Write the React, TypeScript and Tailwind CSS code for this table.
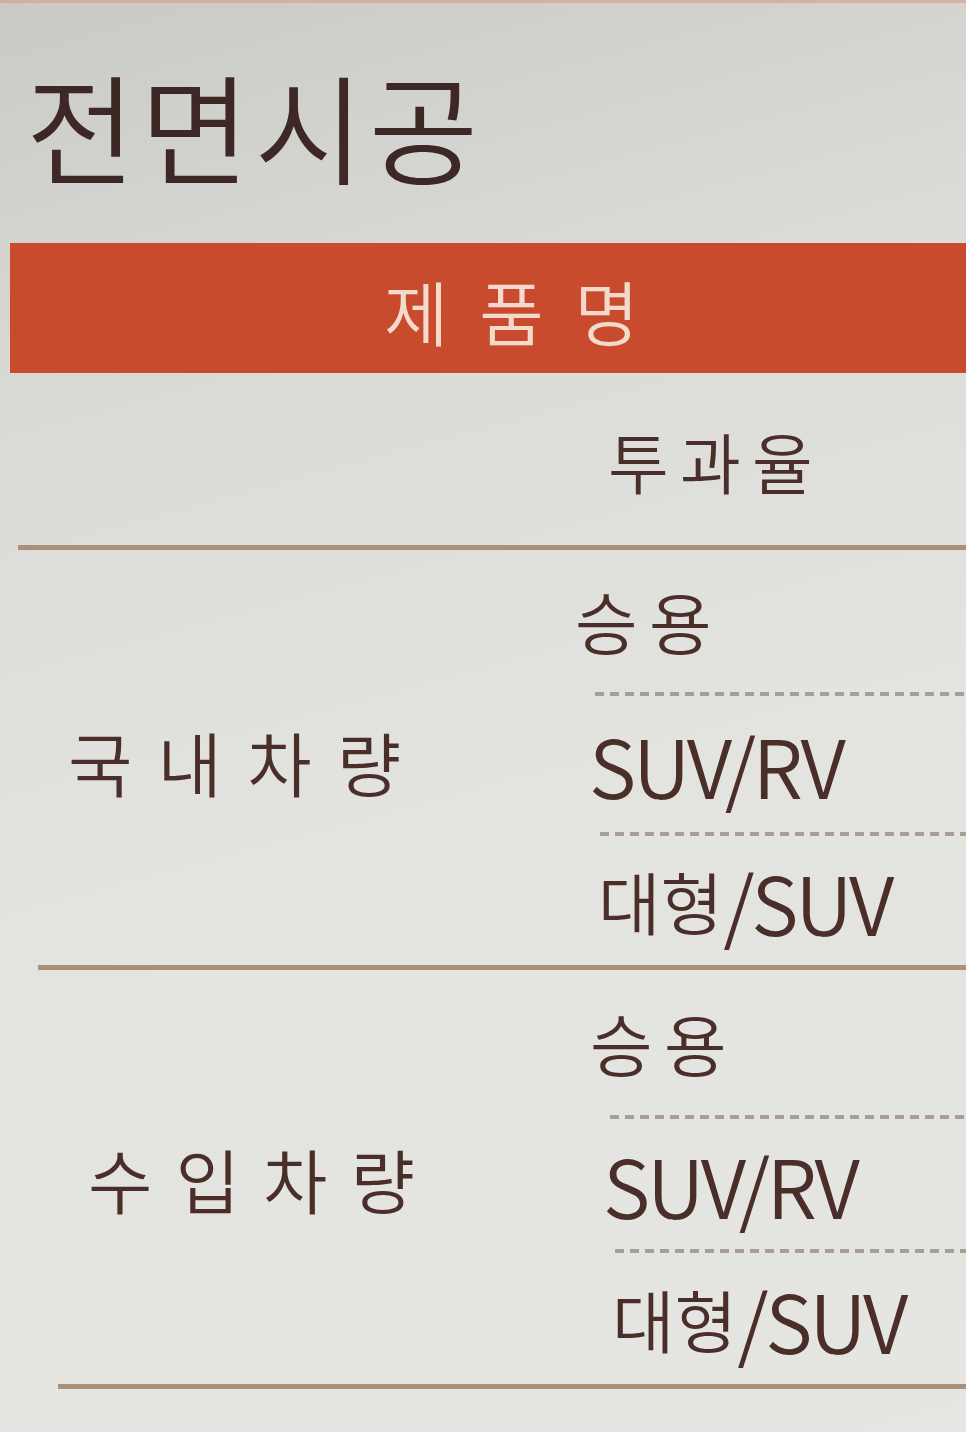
import React from "react";

const KR = { fontFamily: '"Noto Sans CJK KR", "Noto Sans", sans-serif' };

function Dash({ ml }: { ml: string }) {
  return (
    <div
      className={`h-[4px] ${ml} bg-[repeating-linear-gradient(90deg,#9b8b82_0px,#9b8b82_9px,transparent_9px,transparent_15px)] opacity-80`}
    />
  );
}

function Item({ ko, en, h, pl }: { ko?: string; en?: string; h: string; pl: string }) {
  return (
    <div className={`flex items-center ${h} ${pl} text-[#4a2e2a] leading-none font-[350]`}>
      {ko && <span className={`text-[68px] ${en ? "" : "tracking-[0.17em]"}`}>{ko}</span>}
      {en && <span className="text-[80px] tracking-[-0.04em]">{en}</span>}
    </div>
  );
}

export default function App() {
  return (
    <div
      className="w-[966px] h-[1432px] overflow-hidden bg-[linear-gradient(165deg,#c9cac6_0%,#dadbd7_25%,#e3e4e0_55%,#e5e6e2_100%)]"
      style={KR}
    >
      <div className="h-[3px] bg-[#d6a48f] opacity-70" />
      <div className="h-[240px] pt-[62px] pl-[26px]">
        <div className="text-[119px] leading-none text-[#3d2826] tracking-[0.04em] font-[350]">전면시공</div>
      </div>
      <div className="ml-[10px] h-[130px] bg-[#c84b2d] flex items-center pl-[374px] pt-[6px]">
        <span className="text-[70px] leading-none text-[#f3dacd] tracking-[0.44em] font-[350]">제품명</span>
      </div>
      <div className="h-[172px] flex items-center pl-[608px] pt-[2px]">
        <span className="text-[66px] leading-none text-[#4a2e2a] tracking-[0.17em] font-[350]">투과율</span>
      </div>

      {/* group 1 */}
      <div className="ml-[18px] border-t-[5px] border-[#a8907a] flex">
        <div className="w-[557px] flex items-center pl-[50px] pt-[8px]">
          <span className="text-[70px] leading-none text-[#4a2e2a] tracking-[0.36em] font-[350]">국내차량</span>
        </div>
        <div className="flex-1 flex flex-col">
          <Item ko="승용" h="h-[142px]" pl="pl-[0px]" />
          <Dash ml="ml-[20px]" />
          <Item en="SUV/RV" h="h-[136px]" pl="pl-[14px]" />
          <Dash ml="ml-[25px]" />
          <Item ko="대형" en="/SUV" h="h-[129px]" pl="pl-[23px]" />
        </div>
      </div>

      {/* group 2 */}
      <div className="ml-[38px] border-t-[5px] border-[#a8907a] flex">
        <div className="w-[552px] flex items-center pl-[50px] pt-[4px]">
          <span className="text-[70px] leading-none text-[#4a2e2a] tracking-[0.33em] font-[350]">수입차량</span>
        </div>
        <div className="flex-1 flex flex-col">
          <Item ko="승용" h="h-[145px]" pl="pl-[0px]" />
          <Dash ml="ml-[20px]" />
          <Item en="SUV/RV" h="h-[130px]" pl="pl-[13px]" />
          <Dash ml="ml-[25px]" />
          <Item ko="대형" en="/SUV" h="h-[131px]" pl="pl-[22px]" />
        </div>
      </div>
      <div className="ml-[58px] h-[5px] bg-[#a8907a]" />
    </div>
  );
}
